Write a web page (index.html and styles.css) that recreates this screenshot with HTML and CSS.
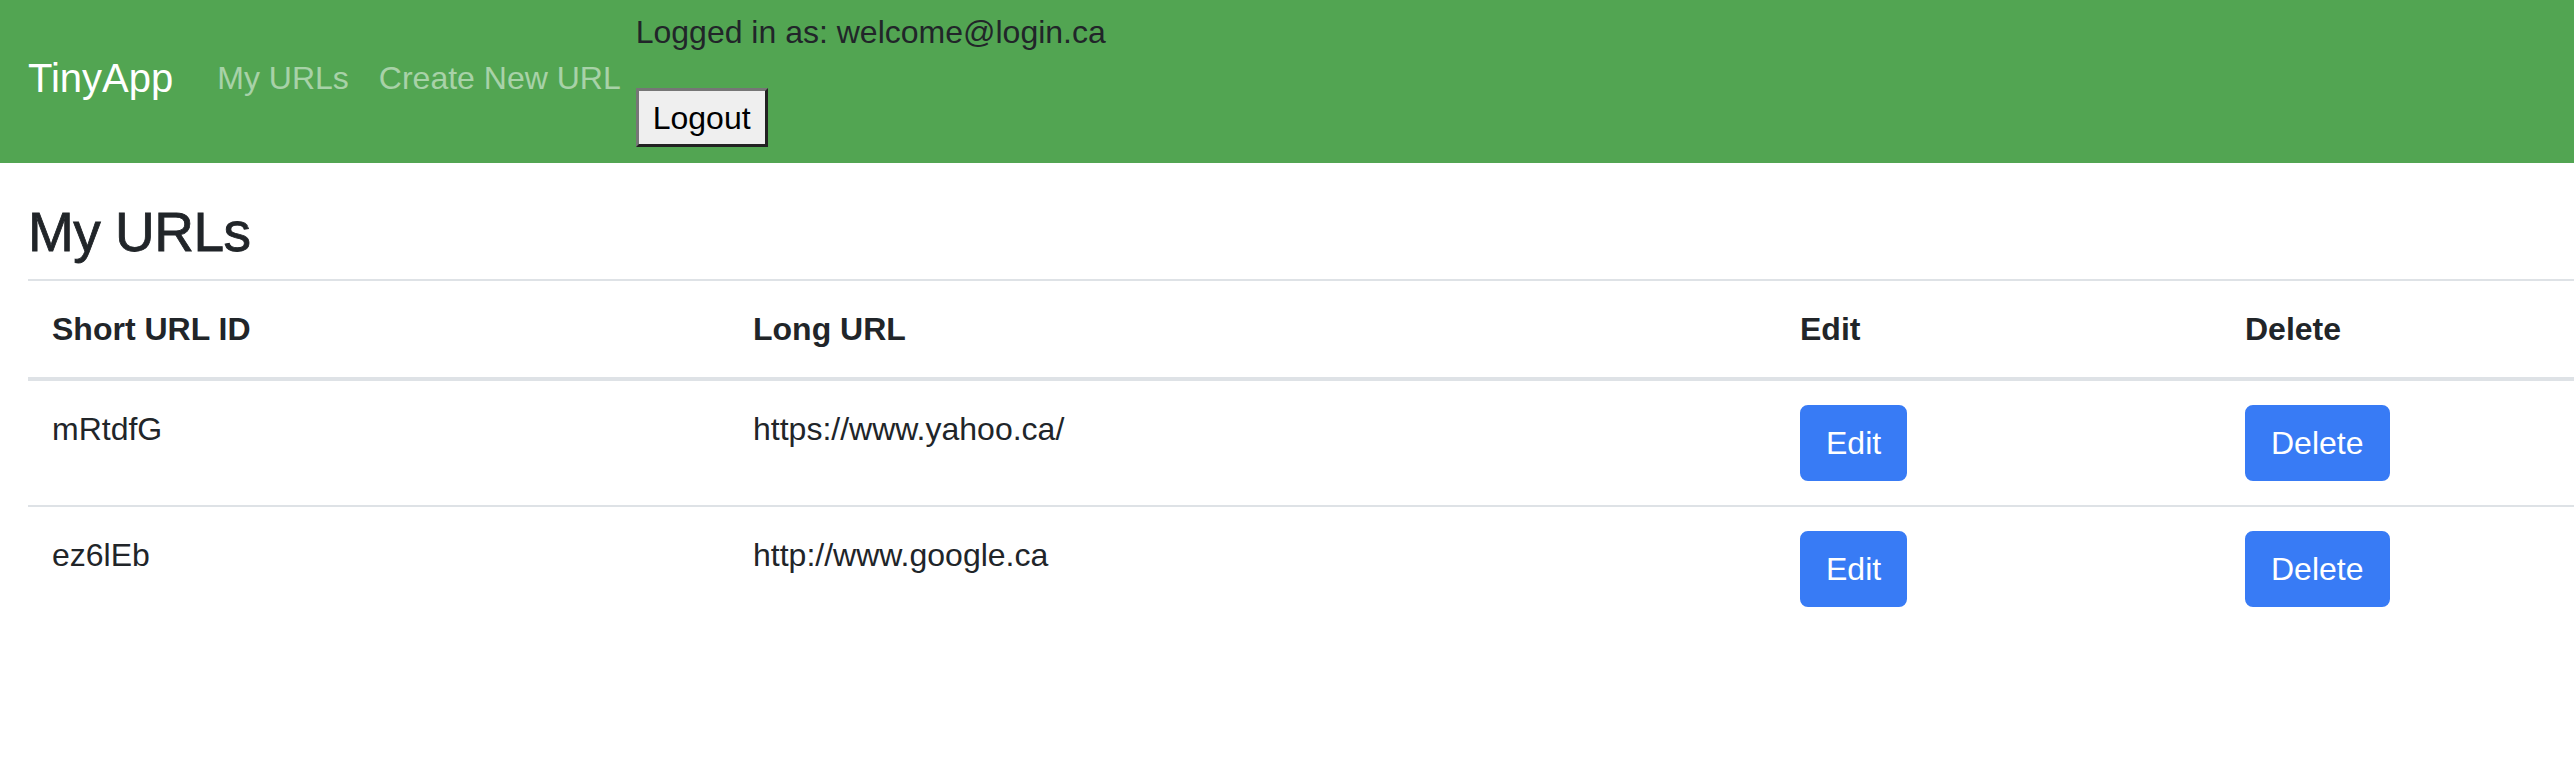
FILE: index.html
```html
<!DOCTYPE html>
<html lang="en">
<head>
<meta charset="utf-8">
<title>TinyApp - My URLs</title>
<link rel="stylesheet" href="styles.css">
</head>
<body>
<nav class="navbar">
  <a class="brand" href="#">TinyApp</a>
  <div class="nav-links">
    <a class="nav-link" href="#">My URLs</a>
    <a class="nav-link" href="#">Create New URL</a>
  </div>
  <div class="session">
    <p class="session-user">Logged in as: welcome@login.ca</p>
    <form class="logout-form" method="post" action="#">
      <button class="logout" type="button">Logout</button>
    </form>
  </div>
</nav>
<main class="main">
  <h3 class="page-title">My URLs</h3>
  <table class="url-table">
    <colgroup>
      <col class="col-id">
      <col class="col-long">
      <col class="col-edit">
      <col class="col-delete">
    </colgroup>
    <thead>
      <tr>
        <th>Short URL ID</th>
        <th>Long URL</th>
        <th>Edit</th>
        <th>Delete</th>
      </tr>
    </thead>
    <tbody>
      <tr>
        <td>mRtdfG</td>
        <td>https://www.yahoo.ca/</td>
        <td><button class="btn" type="button">Edit</button></td>
        <td><button class="btn" type="button">Delete</button></td>
      </tr>
      <tr>
        <td>ez6lEb</td>
        <td>http://www.google.ca</td>
        <td><button class="btn" type="button">Edit</button></td>
        <td><button class="btn" type="button">Delete</button></td>
      </tr>
    </tbody>
  </table>
</main>
</body>
</html>
```

FILE: styles.css
```css
html, body {
  margin: 0;
  padding: 0;
  background: #ffffff;
}

body {
  font-family: "Liberation Sans", Arial, sans-serif;
  font-size: 32px;
  line-height: 48px;
  color: #212529;
}

.navbar {
  display: flex;
  align-items: center;
  background: #52a552;
  padding: 8px 0 16px 28px;
}

.brand {
  font-size: 40px;
  line-height: 60px;
  color: #ffffff;
  text-decoration: none;
  margin-right: 29px;
}

.nav-links {
  display: flex;
}

.nav-link {
  display: block;
  padding: 8px 15px;
  color: rgba(255, 255, 255, 0.5);
  text-decoration: none;
}

.session {
  display: flex;
  flex-direction: column;
  align-items: flex-start;
}

.session-user {
  margin: 0 0 32px 0;
  color: #212529;
}

.logout-form {
  margin: 0;
}

.logout {
  display: block;
  font-family: "Liberation Sans", Arial, sans-serif;
  font-size: 32px;
  line-height: 48px;
  color: #000000;
  background: #efefef;
  padding: 3px 14px 2px 14px;
  border-style: solid;
  border-width: 3px;
  border-color: #767676 #222222 #222222 #767676;
  border-radius: 0;
  margin: 0;
}

.main {
  padding: 0 0 0 28px;
}

.page-title {
  margin: 36px 0 14px 0;
  font-size: 55px;
  line-height: 66px;
  font-weight: 500;
  letter-spacing: -0.5px;
  -webkit-text-stroke: 0.8px #212529;
  color: #212529;
}

.url-table {
  width: 100%;
  border-collapse: collapse;
  table-layout: fixed;
}

.col-id { width: 701px; }
.col-long { width: 1047px; }
.col-edit { width: 445px; }

.url-table th,
.url-table td {
  padding: 24px;
  text-align: left;
  border-top: 2px solid #dee2e6;
  vertical-align: top;
  white-space: nowrap;
}

.url-table thead th {
  font-weight: bold;
  vertical-align: bottom;
  border-bottom: 4px solid #dee2e6;
}

.btn {
  display: inline-block;
  font-family: "Liberation Sans", Arial, sans-serif;
  font-size: 32px;
  line-height: 48px;
  color: #ffffff;
  background: #387bf5;
  border: 2px solid #387bf5;
  border-radius: 8px;
  padding: 12px 24px;
  margin: 0;
  vertical-align: top;
}
```
